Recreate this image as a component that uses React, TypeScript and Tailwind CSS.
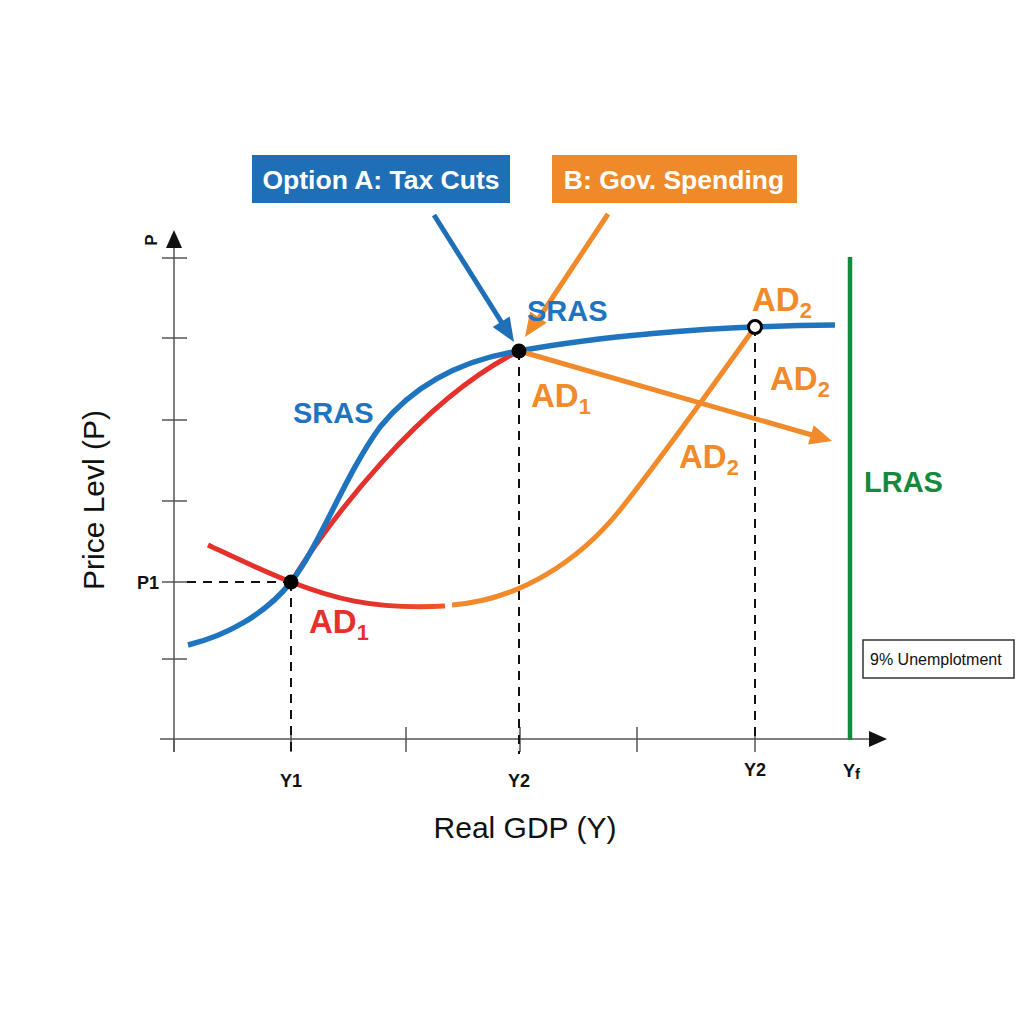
import React from "react";

const BLUE = "#1f74bf";
const RED = "#e5312b";
const ORANGE = "#f08a2a";
const GREEN = "#158a3e";

const yTicks = [258, 338, 420, 501, 582, 659];
const xTicks = [291, 406, 520, 637, 755];

function Sub({ x, y, main, sub, color, size = 33 }: { x: number; y: number; main: string; sub: string; color: string; size?: number }) {
  return (
    <text x={x} y={y} fill={color} fontSize={size} fontWeight={700}>
      {main}
      <tspan fontSize={size * 0.66} dy={7}>
        {sub}
      </tspan>
    </text>
  );
}

export default function App() {
  return (
    <div className="relative w-[1024px] h-[1024px] bg-white overflow-hidden font-['Liberation_Sans',Arial,sans-serif]">
      <svg width={1024} height={1024} viewBox="0 0 1024 1024" className="absolute inset-0">
        <defs>
          <linearGradient id="adfade" gradientUnits="userSpaceOnUse" x1="208" y1="0" x2="445" y2="0">
            <stop offset="0.7" stopColor={RED} />
            <stop offset="1" stopColor="#ee5a24" />
          </linearGradient>
        </defs>

        {/* policy boxes */}
        <rect x={252} y={155} width={258} height={48} fill="#1e6fb6" />
        <text x={381} y={189} textAnchor="middle" fill="#fff" fontSize={26.5} fontWeight={700}>
          Option A: Tax Cuts
        </text>
        <rect x={552} y={155} width={245} height={48} fill="#ef8a2a" />
        <text x={674} y={189} textAnchor="middle" fill="#fff" fontSize={26.5} fontWeight={700}>
          B: Gov. Spending
        </text>

        {/* pointer arrows */}
        <line x1={434} y1={215} x2={502} y2={323} stroke="#1e6fb6" strokeWidth={5} />
        <polygon points="514,342 492.7,327 509.7,316.4" fill="#1e6fb6" />
        <line x1={608} y1={214} x2={539} y2={318} stroke={ORANGE} strokeWidth={5} />
        <polygon points="525,337 530.1,311.5 546.7,322.7" fill={ORANGE} />

        {/* axes */}
        <line x1={174} y1={244} x2={174} y2={752} stroke="#555" strokeWidth={1.5} />
        <polygon points="174,230 166,248 182,248" fill="#111" />
        <line x1={160} y1={739} x2={872} y2={739} stroke="#555" strokeWidth={1.5} />
        <polygon points="887,739 869,731 869,747" fill="#111" />
        {yTicks.map((y) => (
          <line key={y} x1={162} y1={y} x2={187} y2={y} stroke="#555" strokeWidth={1.5} />
        ))}
        <line x1={174} y1={739} x2={174} y2={752} stroke="#555" strokeWidth={1.5} />
        {xTicks.map((x) => (
          <line key={x} x1={x} y1={727} x2={x} y2={752} stroke="#555" strokeWidth={1.5} />
        ))}

        {/* guides */}
        <g stroke="#111" strokeWidth={2} strokeDasharray="9 7">
          <line x1={187} y1={582} x2={291} y2={582} />
          <line x1={291} y1={582} x2={291} y2={754} />
          <line x1={519} y1={351} x2={519} y2={754} />
          <line x1={755} y1={327} x2={755} y2={742} />
        </g>

        {/* LRAS */}
        <line x1={850} y1={257} x2={850} y2={740} stroke={GREEN} strokeWidth={4.5} />

        {/* curves */}
        <path
          d="M208 545 C240 560 265 572 291 582 C330 597 370 610 445 606"
          fill="none"
          stroke="url(#adfade)"
          strokeWidth={5}
        />
        <path
          d="M452 605 C520 600 580 560 620 510 C660 460 710 390 755 327"
          fill="none"
          stroke={ORANGE}
          strokeWidth={5}
        />
        <path d="M291 582 C330 520 420 400 519 351" fill="none" stroke={RED} strokeWidth={5} />
        <path
          d="M188 645 C225 636 265 615 291 582 C320 545 345 475 380 427 C410 390 455 361 519 351 C590 338 700 326 835 325"
          fill="none"
          stroke={BLUE}
          strokeWidth={5.5}
        />
        <line x1={519} y1={351} x2={812} y2={435} stroke={ORANGE} strokeWidth={5} />
        <polygon points="832,441 808.1,444.5 813.7,425.3" fill={ORANGE} />

        {/* points */}
        <circle cx={291} cy={582} r={7.5} fill="#000" />
        <circle cx={519} cy={351} r={7.5} fill="#000" />
        <circle cx={755} cy={327} r={6.5} fill="#fff" stroke="#000" strokeWidth={3} />

        {/* curve labels */}
        <text x={527} y={321} fill={BLUE} fontSize={29} fontWeight={700}>SRAS</text>
        <text x={293} y={423} fill={BLUE} fontSize={29} fontWeight={700}>SRAS</text>
        <Sub x={752} y={311} main="AD" sub="2" color={ORANGE} />
        <Sub x={770} y={390} main="AD" sub="2" color={ORANGE} />
        <Sub x={679} y={468} main="AD" sub="2" color={ORANGE} />
        <Sub x={531} y={407} main="AD" sub="1" color={ORANGE} />
        <Sub x={309} y={633} main="AD" sub="1" color={RED} />
        <text x={864} y={492} fill={GREEN} fontSize={29} fontWeight={700}>LRAS</text>

        {/* axis labels */}
        <text x={137} y={589} fill="#111" fontSize={18} fontWeight={700}>P1</text>
        <text transform="translate(157 240) rotate(-90)" fill="#111" fontSize={17} fontWeight={700} textAnchor="middle">
          P
        </text>
        <text transform="translate(104 500) rotate(-90)" fill="#111" fontSize={30} textAnchor="middle">
          Price Levl (P)
        </text>
        <text x={291} y={787} fill="#111" fontSize={18} fontWeight={700} textAnchor="middle">Y1</text>
        <text x={519} y={787} fill="#111" fontSize={18} fontWeight={700} textAnchor="middle">Y2</text>
        <text x={755} y={776} fill="#111" fontSize={18} fontWeight={700} textAnchor="middle">Y2</text>
        <text x={843} y={777} fill="#111" fontSize={18} fontWeight={700}>
          Y<tspan fontSize={15} dy={2}>f</tspan>
        </text>
        <text x={525} y={838} fill="#111" fontSize={30} textAnchor="middle">Real GDP (Y)</text>

        {/* note box */}
        <rect x={863} y={640} width={151} height={38} fill="#fff" stroke="#333" strokeWidth={1.5} />
        <text x={870} y={665} fill="#111" fontSize={16}>9% Unemplotment</text>
      </svg>
    </div>
  );
}
